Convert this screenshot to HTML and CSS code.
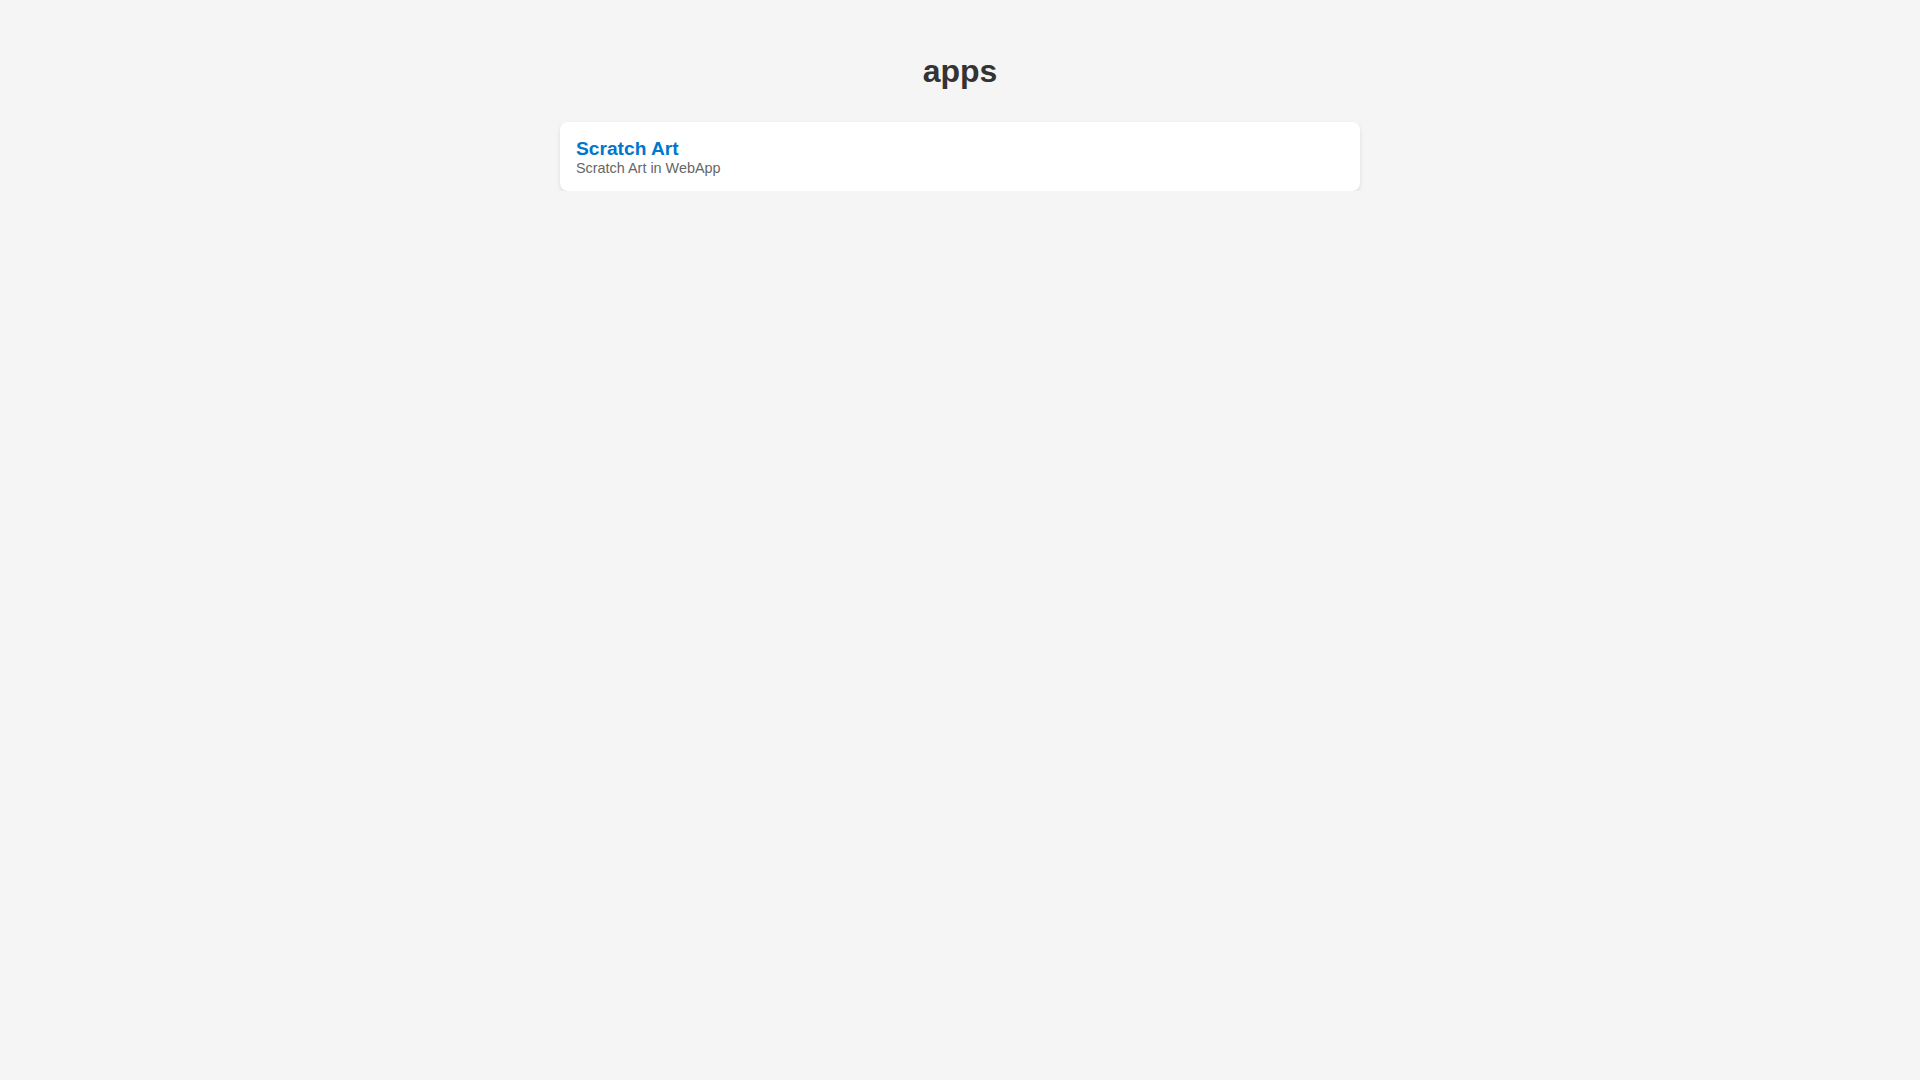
FILE: index.html
```html
<!DOCTYPE html>
<html lang="en">
<head>
<meta charset="utf-8">
<title>apps</title>
<link rel="stylesheet" href="styles.css">
</head>
<body>
<main class="page">
  <h1 class="page-title">apps</h1>
  <ul class="app-list">
    <li class="app-card">
      <a class="app-name" href="#">Scratch Art</a>
      <p class="app-desc">Scratch Art in WebApp</p>
    </li>
  </ul>
</main>
</body>
</html>
```

FILE: styles.css
```css
html, body {
  margin: 0;
  padding: 0;
  background: #f5f5f5;
  font-family: "Liberation Sans", Arial, sans-serif;
  color: #333;
}
.page {
  display: flex;
  flex-direction: column;
  align-items: center;
  padding-top: 53px;
}
.page-title {
  margin: 0 0 32px;
  font-size: 32px;
  font-weight: bold;
  color: #333;
  text-align: center;
}
.app-list {
  list-style: none;
  margin: 0;
  padding: 0;
  width: 800px;
}
.app-card {
  background: #fff;
  border-radius: 8px;
  box-shadow: 0 2px 4px rgba(0, 0, 0, 0.1);
  padding: 16px 16px 15px;
  display: flex;
  flex-direction: column;
}
.app-name {
  font-size: 19.2px;
  font-weight: bold;
  color: #0077cc;
  text-decoration: none;
}
.app-desc {
  margin: 0;
  font-size: 14.4px;
  color: #666;
}
```
